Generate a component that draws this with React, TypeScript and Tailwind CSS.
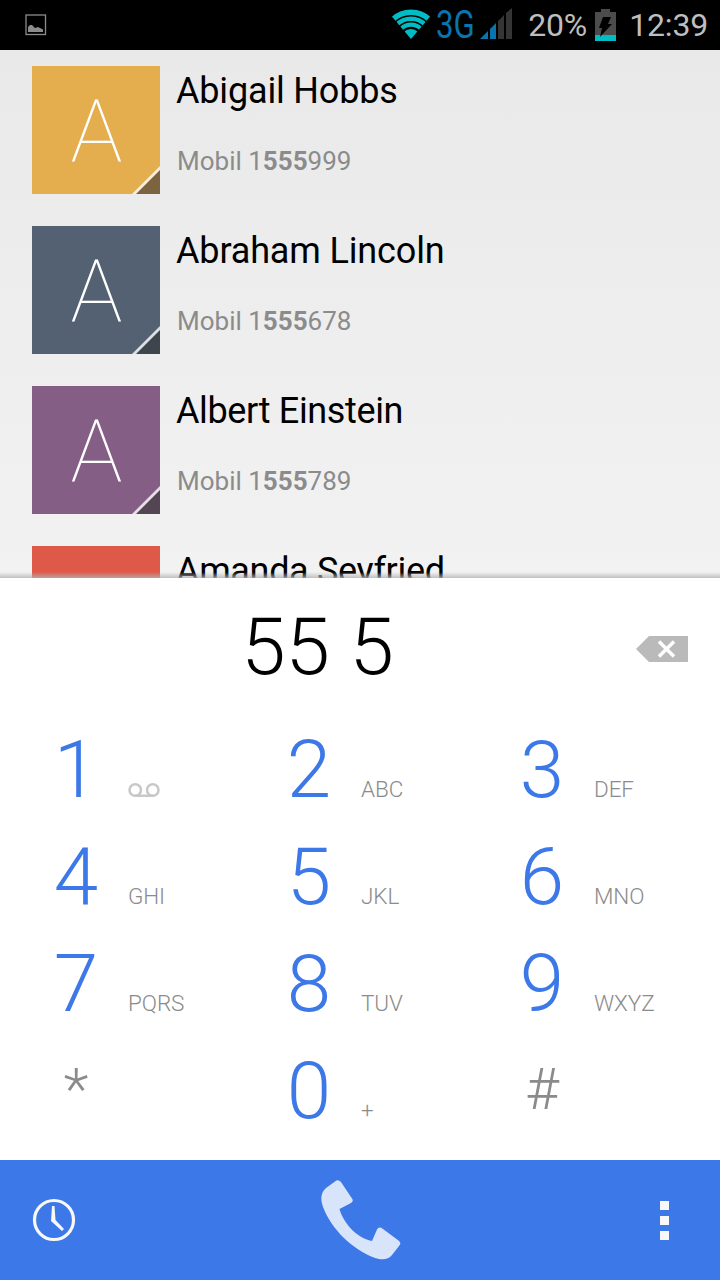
interface Contact {
  name: string;
  color: string;
  corner: string;
  tracking: string;
  rest?: string;
}

const contacts: Contact[] = [
  { name: 'Abigail Hobbs', color: 'bg-[#e4ae4f]', corner: 'text-[#7b643f]', tracking: 'tracking-[-0.17px]', rest: '999' },
  { name: 'Abraham Lincoln', color: 'bg-[#536173]', corner: 'text-[#3e454d]', tracking: 'tracking-[-0.15px]', rest: '678' },
  { name: 'Albert Einstein', color: 'bg-[#855e86]', corner: 'text-[#544555]', tracking: 'tracking-[-0.36px]', rest: '789' },
];

const keys = [
  { digit: '1', letters: 'voicemail' },
  { digit: '2', letters: 'ABC' },
  { digit: '3', letters: 'DEF' },
  { digit: '4', letters: 'GHI' },
  { digit: '5', letters: 'JKL' },
  { digit: '6', letters: 'MNO' },
  { digit: '7', letters: 'PQRS' },
  { digit: '8', letters: 'TUV' },
  { digit: '9', letters: 'WXYZ' },
  { digit: '*', letters: '' },
  { digit: '0', letters: '+' },
  { digit: '#', letters: '' },
];

function StatusBar() {
  return (
    <header className="flex h-[50px] shrink-0 items-center bg-black text-[#bebebe]">
      <svg className="ml-[25px] h-[22px] w-[22px]" viewBox="0 0 22 22">
        <rect x="1" y="1" width="19.5" height="19.5" fill="none" stroke="#8c8c8c" strokeWidth="1.3" />
        <path d="M3 18v-5l2-2h2l3 3 3-1 5 2.500V18z" fill="#8c8c8c" />
      </svg>
      <svg className="mb-[3px] ml-auto h-[31px] w-[40px]" viewBox="0 0 40 31">
        <defs>
          <clipPath id="wifi">
            <path d="M20 31L0 7.500V0h40v7.500z" />
          </clipPath>
        </defs>
        <g clipPath="url(#wifi)" fill="none" stroke="#00bcc4">
          <circle cx="20" cy="31" r="26.700" strokeWidth="5.400" />
          <circle cx="20" cy="31" r="20.300" strokeWidth="4.600" />
          <circle cx="20" cy="31" r="14.300" strokeWidth="4.200" />
          <circle cx="20" cy="31" r="5" strokeWidth="10" />
        </g>
      </svg>
      <span className="mr-px ml-[5px] w-[40px] origin-left scale-x-[0.82] text-[38px] leading-[50px] text-[#0874b0]">3G</span>
      <svg className="mb-[3px] ml-[3px] h-[31px] w-[32px]" viewBox="0 0 32 31">
        <path d="M0 31L8 23v8zM10 21l6-6v16h-6z" fill="#0874b0" />
        <path d="M18 13l6-6v24h-6zM26 5l6-5v31h-6z" fill="#353535" />
      </svg>
      <span className="ml-[16px] w-[60px] text-[32px] leading-[50px] tracking-[-0.2px]">20%</span>
      <svg className="ml-[7px] h-8 w-[21px]" viewBox="0 0 21 32">
        <path d="M6 0h9v3h6v29H0V3h6z" fill="#4c4c4c" />
        <path d="M0 26h21v6H0z" fill="#00bcc4" />
        <path d="M8 8h8l-3 7h4L5 28l2-9H4z" fill="#000" />
      </svg>
      <span className="mr-3 ml-[13px] text-[32px] leading-[50px] tracking-[-0.2px]">12:39</span>
    </header>
  );
}

function ContactRow({ contact }: { contact: Contact }) {
  return (
    <li className="flex h-32 shrink-0">
      <div className={`relative flex h-32 w-32 items-center justify-center ${contact.color}`}>
        <span className="mt-[5px] ml-px text-[87px] leading-none font-thin text-white">A</span>
        <svg className={`absolute right-0 bottom-0 h-7 w-7 ${contact.corner}`} viewBox="0 0 28 28">
          <path d="M0 28L28 0v28z" fill="#fff" fillOpacity="0.8" />
          <path d="M4 28L28 4v24z" fill="currentColor" />
        </svg>
      </div>
      <div className="ml-4">
        <p className={`mt-1 text-[36px] leading-[42px] whitespace-nowrap text-black ${contact.tracking}`}>
          {contact.name}
        </p>
        <p className="mt-[33px] ml-px text-[26px] leading-8 whitespace-nowrap text-[#8b8b8b]">
          Mobil 1<b className="font-bold">555</b>
          {contact.rest}
        </p>
      </div>
    </li>
  );
}

function VoicemailIcon() {
  return (
    <svg className="h-[14px] w-8" viewBox="0 0 32 14" fill="none" stroke="#c8c8c8" strokeWidth="2.500">
      <circle cx="7.250" cy="7" r="5.750" />
      <circle cx="24.750" cy="7" r="5.750" />
      <path d="M7 12.750h18" />
    </svg>
  );
}

function DialKey({ digit, letters }: { digit: string; letters: string }) {
  const isSymbol = digit === '*' || digit === '#';
  return (
    <button type="button" className="flex h-[107px] items-baseline text-left leading-[107px]">
      <span
        className={
          isSymbol
            ? 'relative -top-0.5 ml-6 w-[104px] text-center text-[58px] font-light text-[#8b8b8b]'
            : 'ml-6 w-[104px] text-center text-[80px] font-light text-[#3c78e7]'
        }
      >
        {digit}
      </span>
      {letters === 'voicemail' ? (
        <VoicemailIcon />
      ) : (
        <span className="text-[22.5px] font-light tracking-[-0.1px] text-[#8b8b8b]">{letters}</span>
      )}
    </button>
  );
}

export default function App() {
  return (
    <div className="flex h-[1280px] w-[720px] flex-col overflow-hidden bg-white font-['Roboto',sans-serif]">
      <StatusBar />
      <main className="relative h-[528px] shrink-0 overflow-hidden bg-linear-to-b from-[#e9e9e9] to-[#f2f2f2]">
        <ul className="flex flex-col gap-8 px-8 pt-4">
          {contacts.map((contact) => (
            <ContactRow key={contact.name} contact={contact} />
          ))}
          <li className="flex h-8">
            <div className="h-8 w-32 bg-[#df5948]" />
            <p className="mt-1 ml-4 text-[36px] leading-[42px] tracking-[-0.34px] whitespace-nowrap text-black">
              Amanda Seyfried
            </p>
          </li>
        </ul>
        <div className="absolute inset-x-0 bottom-0 h-1.5 bg-linear-to-b from-transparent to-[#b4b4b4]/80" />
      </main>

      <div className="flex h-[139px] shrink-0 items-center pr-8">
        <p className="mb-0.5 flex-1 pr-px text-center text-[80px] leading-[96px] font-light text-black">55 5</p>
        <svg className="mt-[3px] h-[26px] w-[52px]" viewBox="0 0 52 26">
          <path d="M0 13L13 0h39v26H13z" fill="#bababa" />
          <path d="M23 5.500l15 15M38 5.500l-15 15" stroke="#fff" strokeWidth="3.500" />
        </svg>
      </div>

      <div className="grid h-[443px] shrink-0 grid-cols-[233px_233px_233px] content-start">
        {keys.map((key) => (
          <DialKey key={key.digit} digit={key.digit} letters={key.letters} />
        ))}
      </div>

      <footer className="flex h-[120px] shrink-0 items-center bg-[#3c78e7] pr-[51px] pl-8">
        <svg className="h-11 w-11" viewBox="0 0 44 44" fill="none" stroke="#f8f8f8">
          <circle cx="22" cy="22" r="19.500" strokeWidth="3.200" />
          <path d="M20 8h2.500l1 14 8.500 9-2 2L19 23z" fill="#f8f8f8" stroke="none" />
        </svg>
        <svg className="ml-[245px] h-20 w-20" viewBox="0 0 80 80">
          <path
            d="M14 1.500Q17-1 20 2L31 18.500Q33 21 30 23L18.500 29C22 42 35 58 51 61L56 49.500Q58 46 62 49L77.500 60.500Q81 63 78 66L71 75C67 80 61 80 54 78C31 69 11 50 2 27C-1 18 0 13 5 8Z"
            fill="#d8e4fa"
          />
        </svg>
        <div className="ml-auto flex flex-col gap-1.5">
          <span className="h-[9px] w-[9px] bg-[#f8f8f8]" />
          <span className="h-[9px] w-[9px] bg-[#f8f8f8]" />
          <span className="h-[9px] w-[9px] bg-[#f8f8f8]" />
        </div>
      </footer>
    </div>
  );
}
